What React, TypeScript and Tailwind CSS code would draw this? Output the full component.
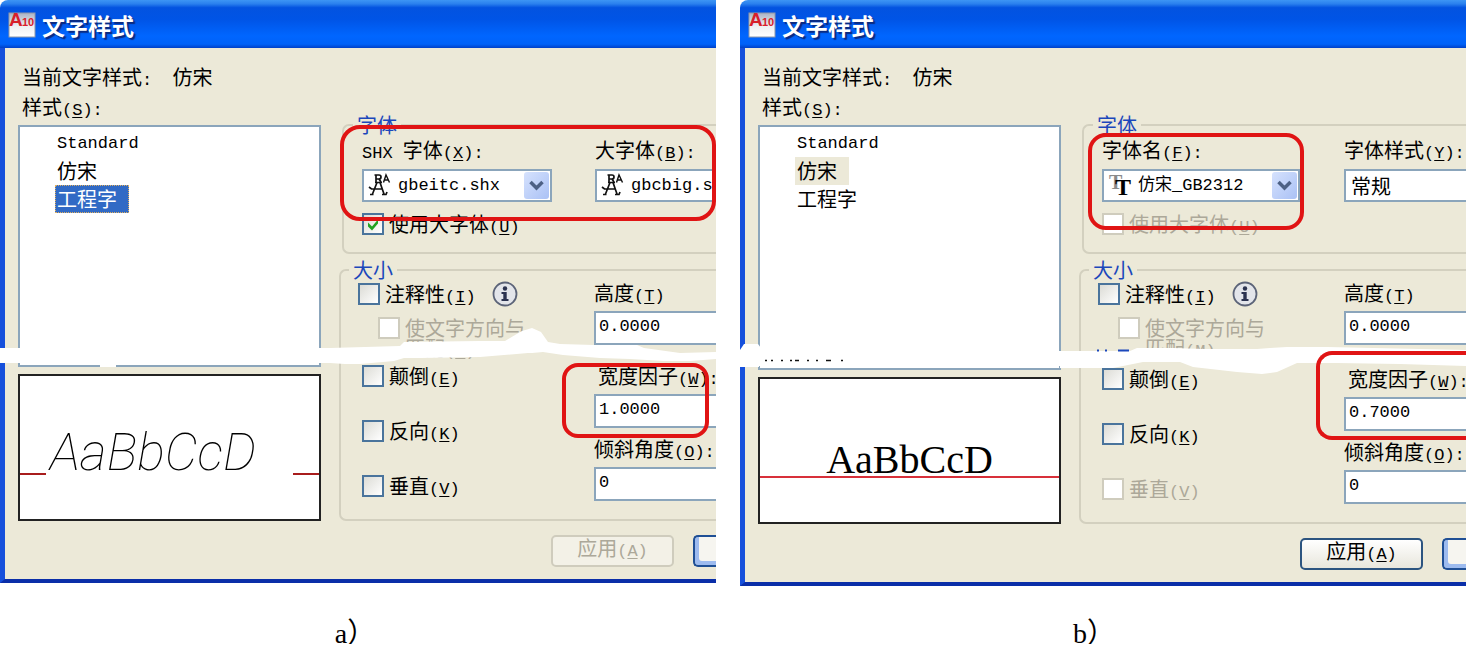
import React, { useId } from "react";

type Variant = "shx" | "truetype";

const MONO = "font-['Liberation_Mono','Noto_Sans_CJK_SC',monospace] text-[17px]";

function Latin({ children }: { children: React.ReactNode }) {
  return <span className={`leading-none ${MONO}`}>{children}</span>;
}

function Key({ k, colon = false }: { k: string; colon?: boolean }) {
  return (
    <Latin>
      (<span className="underline underline-offset-2">{k}</span>){colon ? ":" : ""}
    </Latin>
  );
}

function AppIcon() {
  return (
    <svg width="28" height="28" viewBox="0 0 28 28" aria-hidden="true" className="overflow-visible">
      <defs>
        <linearGradient id="paper" x1="0" y1="0" x2="0" y2="1">
          <stop offset="0" stopColor="#aab3c4" />
          <stop offset="0.55" stopColor="#eef0f2" />
          <stop offset="1" stopColor="#ffffff" />
        </linearGradient>
      </defs>
      <rect x="1" y="2" width="26" height="24" fill="url(#paper)" stroke="#8f98a8" />
      <text x="1" y="15" fontFamily="Liberation Sans" fontWeight="700" fontSize="19" fill="#d8202a">A</text>
      <text x="14" y="15" fontFamily="Liberation Sans" fontWeight="700" fontSize="11" fill="#d8202a">10</text>
    </svg>
  );
}

function ShxIcon() {
  return (
    <svg width="26" height="26" viewBox="0 0 26 26" fill="none" stroke="#111" strokeWidth="1.7" aria-hidden="true" className="shrink-0">
      <path d="M7.500 2h4.500a2 2 0 0 1 0 4H9V2M9 6v3M12 6l2 3M8 9.500h7" />
      <path d="M10 9.500 5.500 21M13 9.500l4 11.500M2 14l2.500 2H15M3 21.500h3.500M15 21.500h4l1-2.500" />
      <path d="M16.500 9.500 19 2l3.500 7.500M17.500 7h4" strokeWidth="1.400" />
    </svg>
  );
}

function TrueTypeIcon() {
  return (
    <svg width="26" height="26" viewBox="0 0 26 26" aria-hidden="true" className="shrink-0">
      <text x="2" y="16" fontFamily="Liberation Serif" fontWeight="700" fontSize="20" fill="#8a8a8a">T</text>
      <text x="8" y="22" fontFamily="Liberation Serif" fontWeight="700" fontSize="24" fill="#000">T</text>
    </svg>
  );
}

function InfoIcon() {
  return (
    <svg width="26" height="26" viewBox="0 0 26 26" aria-hidden="true">
      <circle cx="13" cy="13" r="11.500" fill="#e3e5ea" stroke="#5c6478" strokeWidth="1.800" />
      <circle cx="13" cy="7.500" r="2.200" fill="#2b3350" />
      <path d="M9.500 11h5.200v7h1.800v2h-7v-2h1.800v-5H9.500z" fill="#2b3350" />
    </svg>
  );
}

function Check({
  children,
  checked = false,
  disabled = false,
}: {
  children: React.ReactNode;
  checked?: boolean;
  disabled?: boolean;
}) {
  const id = useId();
  return (
    <div className="flex h-6 items-center gap-[5px]">
      <span className="relative flex h-[22px] w-[22px] shrink-0">
        <input
          id={id}
          type="checkbox"
          defaultChecked={checked}
          disabled={disabled}
          className="h-[22px] w-[22px] appearance-none border-2 border-[#4a749c] bg-linear-to-br from-[#dcdcd6] to-white disabled:border-[#cfccbd] disabled:bg-none disabled:bg-white"
        />
        {checked && (
          <svg viewBox="0 0 22 22" className="pointer-events-none absolute inset-0" aria-hidden="true">
            <path d="M6 9.500l4 4 6-7v4l-6 7-4-4z" fill="#21a121" />
          </svg>
        )}
      </span>
      <label htmlFor={id} className={disabled ? "whitespace-nowrap text-[#aca899]" : "whitespace-nowrap"}>
        {children}
      </label>
    </div>
  );
}

function Field({ label, value }: { label: React.ReactNode; value: string }) {
  const id = useId();
  return (
    <div className="flex flex-col gap-[5px]">
      <label htmlFor={id} className="h-6 whitespace-nowrap leading-[22px]">
        {label}
      </label>
      <input
        id={id}
        defaultValue={value}
        className={`h-[34px] w-full border-2 border-r-0 border-[#8ba5bb] bg-white px-[3px] pb-1 ${MONO}`}
      />
    </div>
  );
}

function Combo({
  label,
  value,
  icon,
  cut = false,
}: {
  label: React.ReactNode;
  value: string;
  icon?: React.ReactNode;
  cut?: boolean;
}) {
  const id = useId();
  return (
    <div className="flex flex-col gap-1">
      <label htmlFor={id} className="h-7 whitespace-nowrap leading-[26px]">
        {label}
      </label>
      <div
        className={`flex h-[33px] items-center border-2 border-[#8ba5bb] bg-white pl-[3px] ${cut ? "border-r-0" : "pr-px"}`}
      >
        {icon}
        <select
          id={id}
          className={`min-w-0 flex-1 appearance-none bg-transparent ${icon ? `pl-[5px] ${MONO}` : "pl-0.5 text-[20px]"}`}
        >
          <option>{value}</option>
        </select>
        {!cut && (
          <span className="flex h-[27px] w-[25px] shrink-0 items-center justify-center rounded-[3px] bg-linear-to-br from-[#d6e2fd] to-[#aac1f5]">
            <svg width="15" height="11" viewBox="0 0 15 11" aria-hidden="true">
              <path d="M1.500 2l6 6 6-6" fill="none" stroke="#4d6185" strokeWidth="3.500" />
            </svg>
          </span>
        )}
      </div>
    </div>
  );
}

function Group({ title, className, children }: { title: string; className: string; children: React.ReactNode }) {
  return (
    <fieldset className={`rounded-l-[7px] border-2 border-r-0 border-[#d3d0bf] ${className}`}>
      <legend className="-ml-[9px] px-1 leading-6 text-[#1b47bb]">{title}</legend>
      {children}
    </fieldset>
  );
}

function Tear({ variant }: { variant: Variant }) {
  if (variant === "shx") {
    return (
      <svg width="716" height="60" viewBox="0 320 716 60" className="pointer-events-none absolute left-0 top-80" aria-hidden="true">
        <path
          fill="#fff"
          d="M0 348H330L400 346 404 342 480 341 505 341 515 335 522 331 532 328 541 332 548 342 560 344 594 345H637L644 348 680 353 716 352V359L690 361 664 361 630 359 600 358 563 355 543 352 532 353 528 353 480 357 420 358 404 358 394 361 360 364 345 364 330 363H0z"
        />
        <rect x="100" y="362" width="16" height="5" fill="#fff" />
      </svg>
    );
  }
  return (
    <svg width="726" height="60" viewBox="740 320 726 60" className="pointer-events-none absolute left-0 top-80" aria-hidden="true">
      <path
        fill="#fff"
        d="M740 350L744 344H758L761 348H908V351H1130L1137 348 1173 348 1203 349H1257L1270 348 1287 347H1327L1466 350V366L1400 364 1337 363H1297L1277 372 1262 374 1237 372 1193 367 1180 362H1143L1113 368H1060V366H759V367H740z"
      />
      <path stroke="#111" strokeWidth="1.500" strokeDasharray="2 4 2 8 2 7 2 3 4 8 2 7 2 8 5 10" d="M765 360.500h82" />
      <path stroke="#1b47bb" strokeWidth="2" d="M1097 350.500h2M1105 350.500h2M1118 350.500h11" />
    </svg>
  );
}

function StyleDialog({ variant }: { variant: Variant }) {
  const shx = variant === "shx";
  const selected = shx ? "工程字" : "仿宋";
  const selectedStyle = shx
    ? "border-dotted border-[#e0b060] bg-[#316ac5] text-white"
    : "border-[#ece9d8] bg-[#ece9d8]";
  return (
    <section className="relative overflow-hidden text-black">
      <header className="flex h-12 items-center gap-[6px] rounded-tl-lg bg-[linear-gradient(180deg,#3d95f4_0%,#2a80ee_8%,#0353e0_16%,#0054e6_40%,#0066ff_75%,#0062f8_92%,#0040c8_100%)] pl-2 pt-0.5">
        <AppIcon />
        <h1 className="text-[23px] font-bold leading-7 text-white [text-shadow:2px_2px_1px_#0a2a80]">文字样式</h1>
      </header>

      <div className="border-b-4 border-l-[5px] border-b-[#0a2ea8] border-l-[#1650dc] bg-[#ece9d8] pb-3 pt-[14px]">
        <div className="flex">
          <div className="ml-[13px] flex w-[303px] shrink-0 flex-col">
            <p className="h-[30px] whitespace-pre pl-1 leading-[30px]">
              当前文字样式<Latin>{":  "}</Latin>仿宋
            </p>
            <p id={`styles-${variant}`} className="h-[30px] pl-1 leading-[30px]">
              样式
              <Key k="S" colon />
            </p>
            <ul
              role="listbox"
              aria-labelledby={`styles-${variant}`}
              className="mt-[3px] flex flex-1 flex-col items-start border-2 border-[#8ba5bb] bg-white pl-[35px] pt-0.5"
            >
              {["Standard", "仿宋", "工程字"].map((name) => (
                <li
                  key={name}
                  role="option"
                  aria-selected={name === selected}
                  className={`flex h-7 items-center border pl-px pr-[11px] leading-6 ${name === selected ? selectedStyle : "border-transparent"}`}
                >
                  {name === "Standard" ? <Latin>{name}</Latin> : name}
                </li>
              ))}
            </ul>
            <div className="mt-[7px] h-[147px] overflow-hidden border-2 border-[#222] bg-white">
              <div className={`flex h-[97px] items-end ${shx ? "pl-[30px]" : "justify-center"}`}>
                {shx ? (
                  <span className="-mb-1.5 font-[Roboto,sans-serif] text-[52px] font-thin italic leading-none">AaBbCcD</span>
                ) : (
                  <span className="-mb-1 font-['Liberation_Serif',serif] text-[40px] leading-none">AaBbCcD</span>
                )}
              </div>
              <div className="flex h-0.5 justify-between">
                {shx ? (
                  <>
                    <span className="w-[26px] bg-[#a81c1c]" />
                    <span className="w-[26px] bg-[#a81c1c]" />
                  </>
                ) : (
                  <span className="w-full bg-[#d8303a]" />
                )}
              </div>
            </div>
          </div>

          <div className="flex min-w-0 flex-1 flex-col pt-[51px]">
            <Group title="字体" className="ml-[21px] pb-4 pl-[18px]">
              <div className={`grid ${shx ? "grid-cols-[190px_1fr] gap-x-[43px]" : "grid-cols-[198px_1fr] gap-x-11"}`}>
                {shx ? (
                  <>
                    <Combo label={<><Latin>SHX </Latin>字体<Key k="X" colon /></>} value="gbeitc.shx" icon={<ShxIcon />} />
                    <Combo label={<>大字体<Key k="B" colon /></>} value="gbcbig.shx" icon={<ShxIcon />} cut />
                  </>
                ) : (
                  <>
                    <Combo label={<>字体名<Key k="F" colon /></>} value="仿宋_GB2312" icon={<TrueTypeIcon />} />
                    <Combo label={<>字体样式<Key k="Y" colon /></>} value="常规" cut />
                  </>
                )}
              </div>
              <div className="mt-[10px]">
                <Check checked={shx} disabled={!shx}>使用大字体<Key k="U" /></Check>
              </div>
            </Group>

            <Group title="大小" className="ml-[18px] mt-1 pb-[18px] pl-[17px]">
              <div className={`grid ${shx ? "grid-cols-[236px_1fr]" : "grid-cols-[246px_1fr]"}`}>
                <div>
                  <div className="flex h-6 items-center gap-4">
                    <Check>注释性<Key k="I" /></Check>
                    <InfoIcon />
                  </div>
                  <div className="ml-5 mt-[10px] h-[42px]">
                    <Check disabled>使文字方向与</Check>
                    <p className="-mt-0.5 pl-[27px] leading-5 text-[#aca899]">匹配<Key k="M" /></p>
                  </div>
                  <div className={`flex flex-col gap-[31px] pl-1 ${shx ? "pt-1.5" : "pt-[9px]"}`}>
                    <Check>颠倒<Key k="E" /></Check>
                    <Check>反向<Key k="K" /></Check>
                    <Check disabled={!shx}>垂直<Key k="V" /></Check>
                  </div>
                </div>
                <div>
                  <Field label={<>高度<Key k="T" /></>} value="0.0000" />
                  <div className={`flex flex-col gap-[10px] ${shx ? "mt-5" : "mt-[23px]"}`}>
                    <Field
                      label={<span className="pl-1">宽度因子<Key k="W" colon /></span>}
                      value={shx ? "1.0000" : "0.7000"}
                    />
                    <Field label={<>倾斜角度<Key k="O" colon /></>} value="0" />
                  </div>
                </div>
              </div>
            </Group>
          </div>
        </div>

        <div className={`mt-[14px] flex h-8 gap-[19px] ${shx ? "pl-[546px]" : "pl-[555px]"}`}>
          <button
            type="button"
            disabled={shx}
            className="w-[123px] shrink-0 rounded-[5px] border-2 border-[#2c5480] bg-linear-to-b from-white to-[#e8e6dc] pb-1 leading-5 disabled:border-[#cfccbd] disabled:bg-none disabled:bg-[#f3f1e7] disabled:text-[#aca899]"
          >
            应用<Key k="A" />
          </button>
          <button
            type="button"
            aria-label="取消"
            className="flex-1 rounded-l-[5px] border-2 border-r-0 border-[#1f4f95] bg-[#f6f5f0] shadow-[inset_4px_-4px_0_0_#9dbbef]"
          />
        </div>
      </div>
    </section>
  );
}

const MARK = "pointer-events-none absolute border-4 border-[#e01414]";
const CAPTION = "text-center font-['Liberation_Serif','Noto_Sans_CJK_SC',serif] text-[28px] h-7 leading-9";

export default function App() {
  return (
    <main className="grid grid-cols-[716fr_726fr] gap-6 overflow-hidden bg-white font-['Noto_Sans_CJK_SC',sans-serif] text-[20px]">
      <figure className="relative flex min-w-0 flex-col">
        <StyleDialog variant="shx" />
        <Tear variant="shx" />
        <div className={`${MARK} left-[340px] right-0 top-[125px] h-24 rounded-[20px]`} />
        <div className={`${MARK} right-[7px] top-[363px] h-[75px] w-[147px] rounded-[16px]`} />
        <figcaption className={`mt-auto pr-1.5 ${CAPTION}`}>a）</figcaption>
      </figure>
      <figure className="relative flex min-w-0 flex-col overflow-hidden">
        <StyleDialog variant="truetype" />
        <Tear variant="truetype" />
        <div className={`${MARK} left-[348px] top-[133px] h-[97px] w-[216px] rounded-[18px]`} />
        <div className={`${MARK} left-[576px] right-0 top-[351px] h-[89px] rounded-l-[16px] border-r-0`} />
        <figcaption className={`mt-[30px] pr-[18px] ${CAPTION}`}>b）</figcaption>
      </figure>
    </main>
  );
}
